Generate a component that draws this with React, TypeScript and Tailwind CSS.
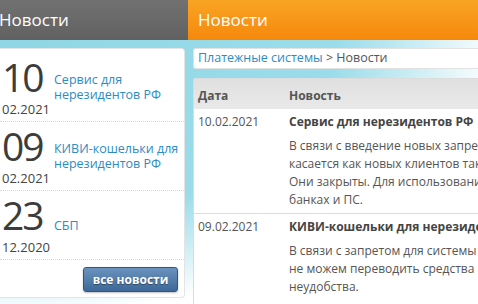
import React from "react";

const entries = [
  { day: "10", my: "02.2021", title: ["Сервис для", "нерезидентов РФ"] },
  { day: "09", my: "02.2021", title: ["КИВИ-кошельки для", "нерезидентов РФ"] },
  { day: "23", my: "12.2020", title: ["СБП"] },
];

const rows = [
  {
    date: "10.02.2021",
    title: "Сервис для нерезидентов РФ",
    lines: [
      "В связи с введение новых запретов со стороны ЦБ РФ, это",
      "касается как новых клиентов так и уже существующих.",
      "Они закрыты. Для использования рекомендуем счета в других",
      "банках и ПС.",
    ],
    pb: "pb-[4px]",
  },
  {
    date: "09.02.2021",
    title: "КИВИ-кошельки для нерезидентов РФ",
    lines: [
      "В связи с запретом для системы КИВИ мы временно",
      "не можем переводить средства на кошельки. Приносим извинения за",
      "неудобства.",
    ],
    pb: "pb-[10px]",
  },
];

export default function App() {
  return (
    <div className="w-[478px] h-[304px] overflow-hidden bg-white font-['Open_Sans',sans-serif]">
      <div className="flex h-[40px]">
        <div className="w-[188px] shrink-0 bg-gradient-to-b from-[#717171] to-[#616161] flex items-center pb-[1px]">
          <span className="text-white text-[17px] leading-none -ml-[1px]">Новости</span>
        </div>
        <div className="flex-1 bg-gradient-to-b from-[#f9a424] to-[#f5880a] flex items-center pl-[10px] pb-[1px]">
          <span className="text-white text-[17px] leading-none">Новости</span>
        </div>
      </div>
      <div className="flex h-[264px] pt-[8px] gap-[8px] bg-[radial-gradient(ellipse_at_top_left,#8fd7e6_0%,#9bdcea_50%,#ffffff_74%)]">
        <div className="w-[185px] h-[250px] shrink-0 bg-white rounded-r-[4px] border border-l-0 border-[#e4e4e4] pt-[4px] flex flex-col">
          {entries.map((e) => (
            <div key={e.day + e.my} className="flex items-center border-b border-dotted border-[#d8d8d8] pt-[4px] pb-[4px] h-[69px]">
              <div className="w-[54px] shrink-0 pl-[2px] flex flex-col text-[#3c3c3c]">
                <span className="text-[39px] leading-[32px] mt-[4px] tracking-[-2px]">{e.day}</span>
                <span className="text-[13px] leading-[16px] mt-[8px] text-[#444]">{e.my}</span>
              </div>
              <div className="text-[12.5px] leading-[15px] text-[#2b8cc4]">
                {e.title.map((t) => (
                  <div key={t}>{t}</div>
                ))}
              </div>
            </div>
          ))}
          <div className="flex justify-end pr-[6px] mt-[7px]">
            <div className="w-[95px] h-[25px] rounded-[3px] border border-[#2f5683] bg-gradient-to-b from-[#6a93bf] to-[#3d6897] flex items-center justify-center shadow-[0_1px_2px_rgba(0,0,0,0.25)]">
              <span className="text-white text-[12px] font-bold leading-none [text-shadow:0_1px_1px_rgba(0,0,0,0.4)]">все новости</span>
            </div>
          </div>
        </div>
        <div className="w-[320px] shrink-0 flex flex-col">
          <div className="h-[25px] bg-white rounded-l-[3px] border border-r-0 border-[#e2e2e2] flex items-center pl-[4px] text-[12.5px] whitespace-nowrap">
            <span className="text-[#2b8cc4]">Платежные системы</span>
            <span className="text-[#555]">&nbsp;&gt; Новости</span>
          </div>
          <div className="mt-[9px] bg-white border-l border-t border-[#dcdcdc] rounded-tl-[3px] flex-1 text-[12px]">
            <div className="h-[30px] bg-gradient-to-b from-[#e0e0e0] to-[#e9e9e9] flex items-center pt-[5px] font-bold text-[#555]">
              <div className="w-[95px] pl-[4px]">Дата</div>
              <div>Новость</div>
            </div>
            {rows.map((r) => (
              <div key={r.date} className={`flex border-b border-[#dcdcdc] pt-[4px] ${r.pb}`}>
                <div className="w-[95px] shrink-0 pl-[4px] leading-[18px] text-[#555]">{r.date}</div>
                <div className="whitespace-nowrap">
                  <div className="font-bold text-[#444] leading-[18px]">{r.title}</div>
                  <div className="mt-[6px] text-[#555] leading-[18px]">
                    {r.lines.map((l) => (
                      <div key={l}>{l}</div>
                    ))}
                  </div>
                </div>
              </div>
            ))}
          </div>
        </div>
      </div>
    </div>
  );
}
